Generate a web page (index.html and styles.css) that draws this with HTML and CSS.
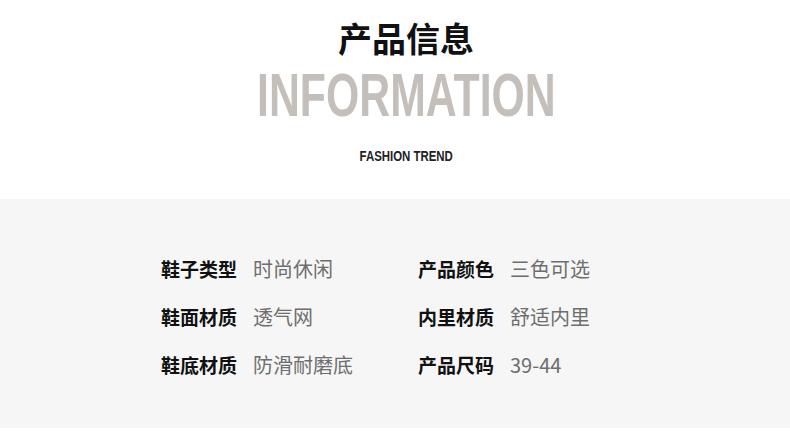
FILE: index.html
```html
<!DOCTYPE html>
<html lang="zh">
<head>
<meta charset="utf-8">
<link rel="stylesheet" href="styles.css">
</head>
<body>
<header class="head">
  <h1 class="title">产品信息</h1>
  <div class="big">INFORMATION</div>
  <div class="sub">FASHION TREND</div>
</header>
<section class="info">
  <div class="grid">
    <div class="item"><span class="k">鞋子类型</span><span class="v">时尚休闲</span></div>
    <div class="item"><span class="k">产品颜色</span><span class="v">三色可选</span></div>
    <div class="item"><span class="k">鞋面材质</span><span class="v">透气网</span></div>
    <div class="item"><span class="k">内里材质</span><span class="v">舒适内里</span></div>
    <div class="item"><span class="k">鞋底材质</span><span class="v">防滑耐磨底</span></div>
    <div class="item"><span class="k">产品尺码</span><span class="v">39-44</span></div>
  </div>
</section>
</body>
</html>
```
FILE: styles.css
```css
html, body { margin: 0; padding: 0; background: #fff; }
body { width: 790px; height: 433px; overflow: hidden; font-family: "Noto Sans CJK SC", "Noto Sans", sans-serif; }
.head { height: 199px; display: flex; flex-direction: column; align-items: center; padding-left: 22px; box-sizing: border-box; }
.title { margin: 15px 0 0; font-size: 34px; line-height: 46px; font-weight: 700; color: #111; letter-spacing: 0; }
.big { margin-top: 3px; font-family: "Liberation Sans", sans-serif; font-weight: 700; font-size: 62px; line-height: 62px; color: #c4bfba; transform: scaleX(0.69); white-space: nowrap; }
.sub { margin-top: 22px; font-family: "Liberation Sans", sans-serif; font-weight: 700; font-size: 14px; line-height: 16px; color: #222; transform: scaleX(0.815); white-space: nowrap; }
.info { height: 229px; background: #f6f6f6; }
.grid { display: grid; grid-template-columns: 257px 200px; row-gap: 25px; padding: 58px 0 0 161px; }
.item { display: flex; align-items: center; height: 23px; }
.k { font-size: 19px; font-weight: 700; color: #111; width: 92px; }
.v { font-size: 20px; color: #6e6e6e; }
```
